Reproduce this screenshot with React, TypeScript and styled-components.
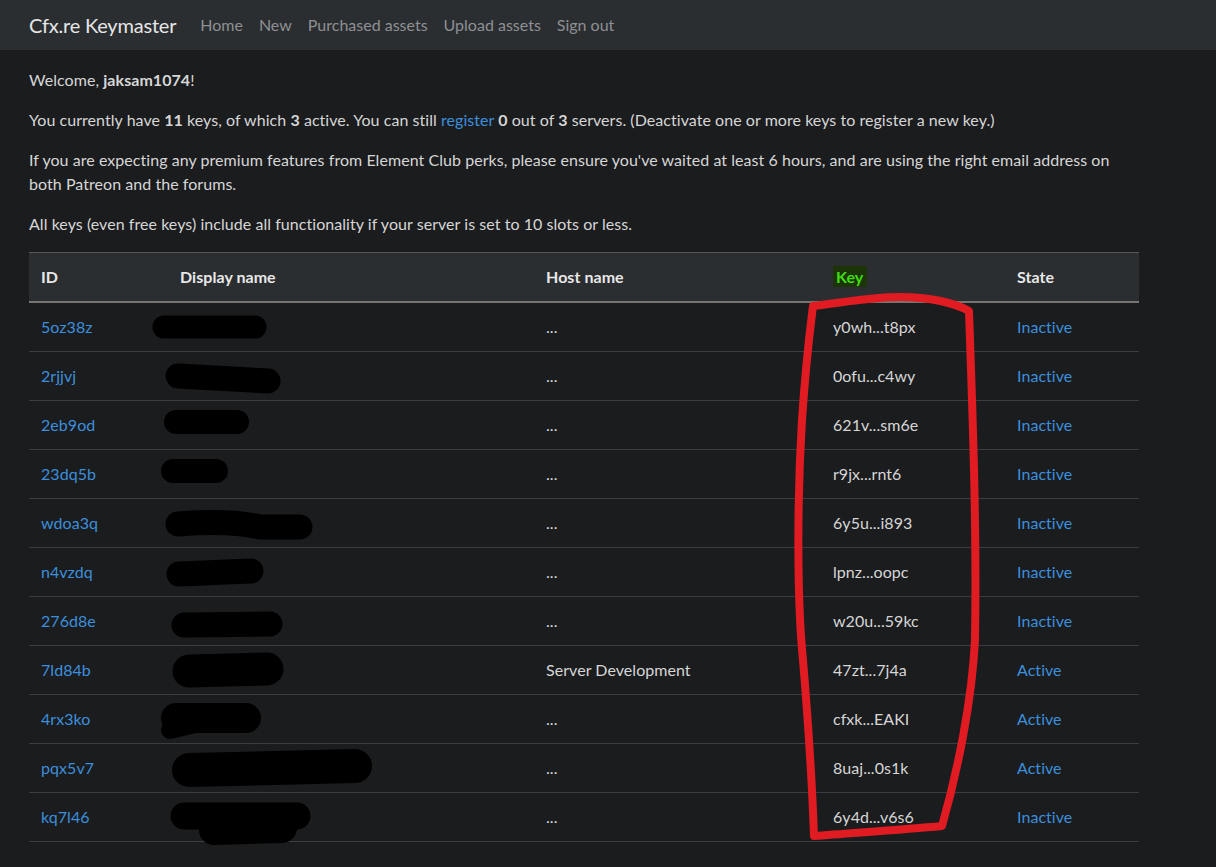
import React from "react";
import styled, { createGlobalStyle } from "styled-components";

const GlobalStyle = createGlobalStyle`
  body {
    margin: 0;
    background: #1b1c1e;
    color: #d6d6d6;
    font-family: Lato, "Open Sans", sans-serif;
    font-size: 16px;
    line-height: 24px;
    letter-spacing: 0.05px;
  }
  * {
    box-sizing: border-box;
  }
`;

const Page = styled.div`
  position: relative;
  min-height: 867px;
`;

const Navbar = styled.nav`
  display: flex;
  align-items: center;
  height: 50px;
  padding: 0 29px;
  background: #2b2e31;
`;

const Brand = styled.a`
  font-size: 20px;
  letter-spacing: -0.2px;
  color: #e6e6e6;
  margin-right: 16px;
  text-decoration: none;
`;

const NavLink = styled.a`
  padding: 0 8px;
  color: #8e9093;
  font-size: 16px;
  letter-spacing: 0;
  text-decoration: none;
`;

const Main = styled.main`
  padding: 18px 29px 0;
  max-width: 1168px;
`;

const Text = styled.p`
  margin: 0 0 16px;
`;

const Link = styled.a`
  color: #3b8fdd;
  text-decoration: none;
`;

const Table = styled.table`
  width: 1110px;
  border-collapse: collapse;
  table-layout: fixed;
`;

const Head = styled.thead`
  background: #2b2e31;
`;

const Th = styled.th`
  text-align: left;
  padding: 12px;
  font-weight: 700;
  color: #e8e8e8;
  border-top: 1px solid #55575a;
  border-bottom: 2px solid #77756f;
`;

const KeyLabel = styled.span`
  display: inline-block;
  padding: 0 4px 0 3px;
  line-height: 21px;
  background: #1c3408;
  color: #3fdc12;
`;

const Td = styled.td`
  padding: 12px;
  border-bottom: 1px solid #3b3d40;
  white-space: nowrap;
`;

const Overlay = styled.svg`
  position: absolute;
  top: 0;
  left: 0;
  pointer-events: none;
`;

interface KeyRow {
  id: string;
  host: string;
  key: string;
  active: boolean;
}

const rows: KeyRow[] = [
  { id: "5oz38z", host: "...", key: "y0wh...t8px", active: false },
  { id: "2rjjvj", host: "...", key: "0ofu...c4wy", active: false },
  { id: "2eb9od", host: "...", key: "621v...sm6e", active: false },
  { id: "23dq5b", host: "...", key: "r9jx...rnt6", active: false },
  { id: "wdoa3q", host: "...", key: "6y5u...i893", active: false },
  { id: "n4vzdq", host: "...", key: "lpnz...oopc", active: false },
  { id: "276d8e", host: "...", key: "w20u...59kc", active: false },
  { id: "7ld84b", host: "Server Development", key: "47zt...7j4a", active: true },
  { id: "4rx3ko", host: "...", key: "cfxk...EAKI", active: true },
  { id: "pqx5v7", host: "...", key: "8uaj...0s1k", active: true },
  { id: "kq7l46", host: "...", key: "6y4d...v6s6", active: false },
];

// scribbles drawn over the display names
const blobs = [
  { d: "M164 327 L255 327", w: 23 },
  { d: "M178 376 L268 381", w: 25 },
  { d: "M176 422 L237 422", w: 24 },
  { d: "M173 471 L216 471", w: 24 },
  { d: "M178 524 Q230 520 260 527 L300 527", w: 25 },
  { d: "M179 574 L251 571", w: 25 },
  { d: "M184 625 L270 624", w: 25 },
  { d: "M189 671 L267 669", w: 33 },
  { d: "M176 718 L246 718", w: 30 },
  { d: "M170 730 L195 724", w: 18 },
  { d: "M189 770 L355 766", w: 34 },
  { d: "M184 816 L297 816", w: 27 },
  { d: "M214 830 L282 828", w: 30 },
];

const App = () => {
  return (
    <Page>
      <GlobalStyle />
      <Navbar>
        <Brand href="#">Cfx.re Keymaster</Brand>
        <NavLink href="#">Home</NavLink>
        <NavLink href="#">New</NavLink>
        <NavLink href="#">Purchased assets</NavLink>
        <NavLink href="#">Upload assets</NavLink>
        <NavLink href="#">Sign out</NavLink>
      </Navbar>
      <Main>
        <Text>
          Welcome, <b>jaksam1074</b>!
        </Text>
        <Text>
          You currently have <b>11</b> keys, of which <b>3</b> active. You can
          still <Link href="#">register</Link> <b>0</b> out of <b>3</b> servers.
          (Deactivate one or more keys to register a new key.)
        </Text>
        <Text>
          If you are expecting any premium features from Element Club perks,
          please ensure you've waited at least 6 hours, and are using the right
          email address on both Patreon and the forums.
        </Text>
        <Text>
          All keys (even free keys) include all functionality if your server is
          set to 10 slots or less.
        </Text>
        <Table>
          <colgroup>
            <col style={{ width: 139 }} />
            <col style={{ width: 366 }} />
            <col style={{ width: 287 }} />
            <col style={{ width: 184 }} />
            <col style={{ width: 134 }} />
          </colgroup>
          <Head>
            <tr>
              <Th>ID</Th>
              <Th>Display name</Th>
              <Th>Host name</Th>
              <Th>
                <KeyLabel>Key</KeyLabel>
              </Th>
              <Th>State</Th>
            </tr>
          </Head>
          <tbody>
            {rows.map((row) => (
              <tr key={row.id}>
                <Td>
                  <Link href="#">{row.id}</Link>
                </Td>
                <Td />
                <Td>{row.host}</Td>
                <Td>{row.key}</Td>
                <Td>
                  <Link href="#">{row.active ? "Active" : "Inactive"}</Link>
                </Td>
              </tr>
            ))}
          </tbody>
        </Table>
      </Main>
      <Overlay width="1216" height="867" viewBox="0 0 1216 867">
        {blobs.map((b, i) => (
          <path
            key={i}
            d={b.d}
            stroke="#000"
            strokeWidth={b.w}
            strokeLinecap="round"
            fill="none"
          />
        ))}
        <path
          d="M813 306 C840 303 870 297 900 297 C930 297 955 303 969 311 C972 400 977 520 975 640 C972 700 958 770 942 826 C900 830 850 833 814 836 C812 780 808 720 803 660 C797 600 797 500 802 420 C806 360 810 330 813 306 Z"
          stroke="#e01b22"
          strokeWidth="8"
          strokeLinejoin="round"
          fill="none"
        />
      </Overlay>
    </Page>
  );
};

export default App;
